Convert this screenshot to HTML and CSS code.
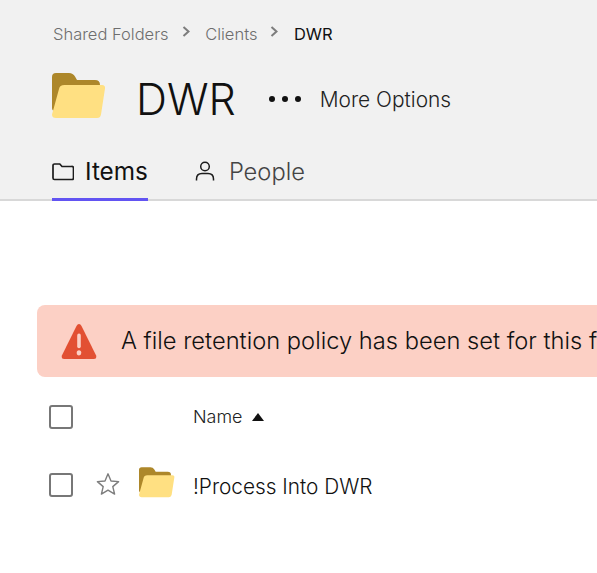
FILE: index.html
```html
<!DOCTYPE html>
<html lang="en">
<head>
    <meta charset="UTF-8">
    <title>DWR</title>
    <link rel="stylesheet" href="styles.css">
</head>
<body>
    <div class="header">
        <div class="crumbs">
            <span>Shared Folders</span>
            <svg class="chevron" width="10" height="12" viewBox="0 0 10 12"><path d="M2.500 1 7.500 5.500 2.500 10" fill="none" stroke="#7d7d7d" stroke-width="2"/></svg>
            <span>Clients</span>
            <svg class="chevron" width="10" height="12" viewBox="0 0 10 12"><path d="M2.500 1 7.500 5.500 2.500 10" fill="none" stroke="#7d7d7d" stroke-width="2"/></svg>
            <span class="current">DWR</span>
        </div>
        <div class="title-row">
            <svg class="title-folder" width="54" height="46" viewBox="0 0 54 46">
                <path d="M0 4a4 4 0 0 1 4-4h13q4 0 6 3.500l2 3.500h18q5 0 5 5v26H3q-3 0-3-3z" fill="#ad872a"/>
                <path d="M7 16q.6-4 5.500-4H50q3.500 0 3 3.500l-4 26q-.6 3.500-4 3.500H4q-4 0-4-3.500z" fill="#ffe082"/>
            </svg>
            <h1>DWR</h1>
            <div class="dots"><i></i><i></i><i></i></div>
            <span class="more">More Options</span>
        </div>
        <div class="tabs">
            <div class="tab active">
                <svg width="22" height="20" viewBox="0 0 22 20"><path d="M1 4.500a1.500 1.500 0 0 1 1.500-1.500h5.300l2.200 2.500h9.500A1.500 1.500 0 0 1 21.500 7v10a1.500 1.500 0 0 1-1.500 1.500H2.500A1.500 1.500 0 0 1 1 17z" fill="none" stroke="#1c1c1c" stroke-width="1.700"/></svg>
                <span>Items</span>
            </div>
            <div class="tab">
                <svg width="20" height="22" viewBox="0 0 20 22"><circle cx="10" cy="6.500" r="4.300" fill="none" stroke="#1c1c1c" stroke-width="1.500"/><path d="M1.500 20.500v-1.500q0-5.500 5.500-5.500h6q5.500 0 5.500 5.500v1.500" fill="none" stroke="#1c1c1c" stroke-width="1.500"/></svg>
                <span>People</span>
            </div>
        </div>
    </div>

    <div class="content">
        <div class="banner">
            <svg width="36" height="35" viewBox="0 1.500 36 31" preserveAspectRatio="none">
                <path d="M18 1.500q1.500 0 2.500 1.700l14.500 26q1.200 3.300-2 3.300H3q-3.200 0-2-3.300l14.500-26Q16.500 1.500 18 1.500z" fill="#e25033"/>
                <rect x="16.200" y="10" width="3.600" height="13" rx="1.800" fill="#fcd0c5"/>
                <circle cx="18" cy="27" r="2.300" fill="#fcd0c5"/>
            </svg>
            <span class="banner-text">A file retention policy has been set for this folder and its contents.</span>
        </div>
        <div class="row head-row">
            <span class="check"></span>
            <span class="name-label">Name</span>
            <svg width="12" height="8" viewBox="0 0 12 8"><path d="M6 0 12 8H0z" fill="#111"/></svg>
        </div>
        <div class="row item-row">
            <span class="check"></span>
            <svg class="star" width="24" height="24" viewBox="0 0 24 24"><path d="M12 1.800 15 9l7.600.6-5.800 5 1.800 7.500L12 18.100 5.400 22.100l1.800-7.500-5.800-5L9 9z" fill="none" stroke="#7d7d7d" stroke-width="1.400" stroke-linejoin="round"/></svg>
            <svg class="item-folder" width="36" height="31" viewBox="0 0 54 46">
                <path d="M0 4a4 4 0 0 1 4-4h13q4 0 6 3.500l2 3.500h18q5 0 5 5v26H3q-3 0-3-3z" fill="#ad872a"/>
                <path d="M7 16q.6-4 5.500-4H50q3.500 0 3 3.500l-4 26q-.6 3.500-4 3.500H4q-4 0-4-3.500z" fill="#ffe082"/>
            </svg>
            <span class="item-name">!Process Into DWR</span>
        </div>
    </div>
</body>
</html>
```

FILE: styles.css
```css
* {
    margin: 0;
    padding: 0;
    box-sizing: border-box;
}

html, body {
    overflow: hidden;
}

body {
    height: 573px;
    background-color: #fff;
    font-family: "Inter", "Liberation Sans", sans-serif;
    color: #111;
}

.header {
    height: 201px;
    padding: 0 0 0 52px;
    background-color: #f1f1f1;
    border-bottom: 2px solid #d8d8d8;
}

.crumbs {
    display: flex;
    align-items: center;
    height: 68px;
    padding-left: 1px;
    font-size: 16.500px;
    font-weight: 300;
    color: #6e6e6e;
}

.chevron {
    margin: 0 14px 4px 12px;
}

.chevron + span {
    padding-left: .5px;
}

.crumbs .current {
    font-weight: 400;
    color: #111;
}

.title-row {
    display: flex;
    align-items: center;
    height: 62px;
}

.title-folder {
    margin-bottom: 6px;
}

h1 {
    margin-left: 30px;
    font-size: 43px;
    font-weight: 300;
}

.dots {
    display: flex;
    gap: 7px;
    margin-left: 33px;
}

.dots i {
    display: block;
    width: 6px;
    height: 6px;
    border-radius: 50%;
    background-color: #111;
}

.more {
    margin-left: 19px;
    font-size: 20.900px;
    font-weight: 300;
    color: #222;
}

.tabs {
    display: flex;
    gap: 47px;
}

.tab {
    display: flex;
    align-items: center;
    gap: 11px;
    height: 71px;
    padding-top: 14px;
    border-bottom: 3px solid transparent;
    font-size: 23.700px;
    font-weight: 300;
    color: #444;
}

.tab + .tab {
    gap: 14px;
}

.tab.active {
    font-size: 24.300px;
    font-weight: 400;
    color: #111;
    border-bottom-color: #6254f2;
}

.content {
    padding: 104px 0 0 37px;
}

.banner {
    display: flex;
    align-items: center;
    gap: 25px;
    width: 900px;
    height: 72px;
    padding-left: 24px;
    border-radius: 8px;
    background-color: #fcd0c5;
    font-size: 23.700px;
    font-weight: 300;
    white-space: nowrap;
}

.banner-text {
    margin-left: -1px;
    margin-bottom: 2px;
}

.row {
    display: flex;
    align-items: center;
    padding-left: 12px;
}

.head-row {
    height: 80px;
}

.item-row {
    height: 58px;
}

.check {
    width: 24px;
    height: 24px;
    border: 2px solid #777;
    border-radius: 3px;
    background-color: #fff;
}

.item-row .check {
    margin-bottom: 2px;
}

.name-label {
    margin-left: 120px;
    margin-right: 10px;
    margin-bottom: 2px;
    font-size: 17.900px;
    font-weight: 300;
    color: #222;
}

.star {
    margin-left: 23px;
    margin-bottom: 5px;
}

.item-folder {
    margin-left: 19px;
    margin-bottom: 8px;
}

.item-name {
    margin-left: 18px;
    font-size: 20.800px;
    font-weight: 300;
}
```
